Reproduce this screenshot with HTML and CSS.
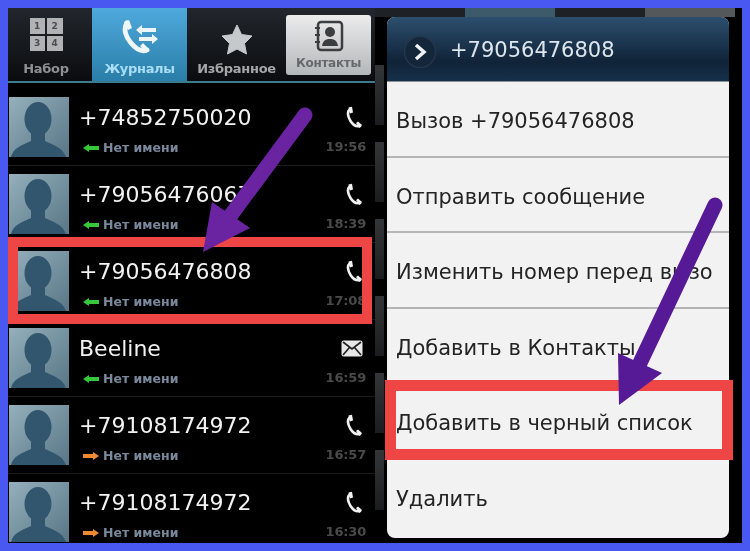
FILE: index.html
```
<!DOCTYPE html>
<html lang="ru">
<head>
<meta charset="utf-8">
<title>Журналы</title>
<link rel="stylesheet" href="styles.css">
</head>
<body>
<svg class="defs" width="0" height="0" aria-hidden="true">
  <defs>
    <symbol id="person" viewBox="0 0 60 60">
      <ellipse cx="29" cy="22" rx="13.500" ry="17"/>
      <path d="M2 60C4 51 13 48 22 44V32H36V44C45 48 54 51 57 60Z"/>
    </symbol>
    <symbol id="phone" viewBox="0 0 18 24">
      <path d="M5 3C2 6 3 11 5.500 15C8 19 11 21 15 20" fill="none" stroke="currentColor" stroke-width="2.600" stroke-linecap="round"/>
      <path d="M3.500 1.500L7 0.800L8 6.500L5 7.500ZM11 17L13 15.500L17 19L14.500 22Z" fill="currentColor"/>
    </symbol>
    <symbol id="mail" viewBox="0 0 22 17">
      <rect x="0.500" y="0.500" width="21" height="16" rx="2" fill="#e8e8e8"/>
      <path d="M2 2L11 9L20 2M2 15L8.500 7.500M20 15L13.500 7.500" fill="none" stroke="#222" stroke-width="1.700"/>
    </symbol>
    <symbol id="in" viewBox="0 0 16 8">
      <path d="M0 4L6 0V2H16V6H6V8Z" fill="#35c83a"/>
    </symbol>
    <symbol id="out" viewBox="0 0 16 8">
      <path d="M16 4L10 0V2H0V6H10V8Z" fill="#f08a30"/>
    </symbol>
  </defs>
</svg>

<main class="page">
  <section class="phone">
    <nav class="tabs">
      <div class="tab tab-first">
        <div class="keypad"><span>1</span><span>2</span><span>3</span><span>4</span></div>
        <span class="tab-label">Набор</span>
      </div>
      <div class="tab tab-active">
        <svg class="tab-icon" viewBox="0 0 38 36" width="38" height="36">
          <path d="M6 4C2 10 5 18 10 24C15 30 21 33 26 31" fill="none" stroke="#eef6fa" stroke-width="5" stroke-linecap="round"/>
          <path d="M3 3L8 1L11 9L7 11ZM19 27L22 24L28 30L25 34Z" fill="#eef6fa"/>
          <path d="M15 11L21 6V9H35V13H21V16ZM37 20L31 15V18H18V22H31V25Z" fill="#eef6fa"/>
        </svg>
        <span class="tab-label">Журналы</span>
      </div>
      <div class="tab tab-fav">
        <svg class="tab-icon" viewBox="0 0 32 31" width="32" height="31">
          <path d="M16 1L20.500 10.500L31 12L23.500 19.500L25.500 30L16 25L6.500 30L8.500 19.500L1 12L11.500 10.500Z" fill="#c6c9cc" stroke="#c6c9cc" stroke-linejoin="round"/>
        </svg>
        <span class="tab-label">Избранное</span>
      </div>
      <div class="tab tab-card">
        <svg class="tab-icon" viewBox="0 0 30 32" width="30" height="32">
          <rect x="4" y="2" width="24" height="28" rx="3" fill="none" stroke="#3c3f42" stroke-width="2.500"/>
          <path d="M1 8H6M1 15H6M1 22H6" stroke="#3c3f42" stroke-width="2"/>
          <circle cx="16" cy="12" r="5" fill="#3c3f42"/>
          <path d="M8 26C9 20 12 19 16 19C20 19 23 20 24 26Z" fill="#3c3f42"/>
        </svg>
        <span class="tab-label">Контакты</span>
      </div>
    </nav>

    <ul class="log">
      <li class="row">
        <div class="avatar"><svg width="60" height="60"><use href="#person"/></svg></div>
        <div class="info"><span class="number">+74852750020</span><span class="sub"><svg width="16" height="8"><use href="#in"/></svg>Нет имени</span></div>
        <div class="meta"><svg class="call" width="18" height="24"><use href="#phone"/></svg><span class="time">19:56</span></div>
      </li>
      <li class="row">
        <div class="avatar"><svg width="60" height="60"><use href="#person"/></svg></div>
        <div class="info"><span class="number">+79056476067</span><span class="sub"><svg width="16" height="8"><use href="#in"/></svg>Нет имени</span></div>
        <div class="meta"><svg class="call" width="18" height="24"><use href="#phone"/></svg><span class="time">18:39</span></div>
      </li>
      <li class="row">
        <div class="avatar"><svg width="60" height="60"><use href="#person"/></svg></div>
        <div class="info"><span class="number">+79056476808</span><span class="sub"><svg width="16" height="8"><use href="#in"/></svg>Нет имени</span></div>
        <div class="meta"><svg class="call" width="18" height="24"><use href="#phone"/></svg><span class="time">17:08</span></div>
      </li>
      <li class="row">
        <div class="avatar"><svg width="60" height="60"><use href="#person"/></svg></div>
        <div class="info"><span class="number">Beeline</span><span class="sub"><svg width="16" height="8"><use href="#in"/></svg>Нет имени</span></div>
        <div class="meta"><svg class="call" width="22" height="24" viewBox="0 0 22 24"><use href="#mail" y="3" width="22" height="17"/></svg><span class="time">16:59</span></div>
      </li>
      <li class="row">
        <div class="avatar"><svg width="60" height="60"><use href="#person"/></svg></div>
        <div class="info"><span class="number">+79108174972</span><span class="sub"><svg width="16" height="8"><use href="#out"/></svg>Нет имени</span></div>
        <div class="meta"><svg class="call" width="18" height="24"><use href="#phone"/></svg><span class="time">16:57</span></div>
      </li>
      <li class="row">
        <div class="avatar"><svg width="60" height="60"><use href="#person"/></svg></div>
        <div class="info"><span class="number">+79108174972</span><span class="sub"><svg width="16" height="8"><use href="#out"/></svg>Нет имени</span></div>
        <div class="meta"><svg class="call" width="18" height="24"><use href="#phone"/></svg><span class="time">16:30</span></div>
      </li>
    </ul>
  </section>

  <section class="phone phone-dim">
    <div class="dim-tabs"><i></i><i class="dim-blue"></i><i></i><i class="dim-light"></i></div>
    <div class="dim-list"><i></i><i></i><i></i><i></i><i></i><i></i></div>
    <div class="menu">
      <header class="menu-head">
        <svg width="34" height="34" viewBox="0 0 34 34">
          <circle cx="17" cy="17" r="15.500" fill="#13263a" stroke="#243648" stroke-width="1.500"/>
          <path d="M13 10L21 17L13 24" fill="none" stroke="#eef2f6" stroke-width="3.500"/>
        </svg>
        <span class="menu-title">+79056476808</span>
      </header>
      <ul class="menu-list">
        <li class="menu-item">Вызов +79056476808</li>
        <li class="menu-item">Отправить сообщение</li>
        <li class="menu-item">Изменить номер перед вызо</li>
        <li class="menu-item">Добавить в Контакты</li>
        <li class="menu-item">Добавить в черный список</li>
        <li class="menu-item">Удалить</li>
      </ul>
    </div>
  </section>

  <div class="mark mark-left"></div>
  <div class="mark mark-right"></div>
  <svg class="arrows" width="750" height="551" viewBox="0 0 750 551">
    <path class="shaft-a" d="M305 115L231 215"/>
    <path class="head-a" d="M203 252L212 202L250 228Z"/>
    <path class="shaft-b" d="M715 205L640 363"/>
    <path class="head-b" d="M619 405L618 353L662 373Z"/>
  </svg>
</main>
</body>
</html>
```

FILE: styles.css
```
* { box-sizing: border-box; }
html, body { margin: 0; padding: 0; }
body { background: #4a58f2; font-family: "DejaVu Sans", sans-serif; }
ul { list-style: none; margin: 0; padding: 0; }
.defs { position: absolute; }

.page {
  position: relative;
  width: 750px;
  height: 551px;
  padding: 8px;
  display: flex;
  overflow: hidden;
  filter: blur(0.5px);
}
.phone {
  width: 367px;
  height: 535px;
  background: #000;
  overflow: hidden;
  display: flex;
  flex-direction: column;
}

/* tabs */
.tabs {
  flex: none;
  height: 75px;
  display: flex;
  background: linear-gradient(#22272d, #0b0c0f);
  border-bottom: 2px solid #3b7d8e;
}
.tab {
  width: 84px;
  display: flex;
  flex-direction: column;
  align-items: center;
  justify-content: flex-end;
  padding-bottom: 3px;
}
.tab-first { padding-right: 8px; }
.tab-active {
  width: 95px;
  background: linear-gradient(#4fa9dc, #2a7ea8);
}
.tab-fav { width: 99px; }
.tab-card {
  width: 85px;
  margin: 7px 0 6px 0;
  border-radius: 3px;
  padding-bottom: 3px;
  background: linear-gradient(#ececec, #b4b7ba);
}
.tab-label { font-size: 13px; font-weight: 700; color: #8e9093; line-height: 18px; letter-spacing: -0.3px; white-space: nowrap; }
.tab-active .tab-label { color: #a9def7; }
.tab-fav .tab-label { color: #a4a6a8; }
.tab-card .tab-label { color: #66696c; font-size: 12px; }
.tab-icon { margin-bottom: 5px; }
.tab-card .tab-icon { margin-bottom: 2px; }
.keypad {
  width: 33px;
  height: 33px;
  display: grid;
  grid-template-columns: 1fr 1fr;
  gap: 2px;
  margin-bottom: 9px;
}
.keypad span {
  background: #b0b2b4;
  color: #4b4d50;
  font-size: 9px;
  font-weight: 700;
  display: flex;
  align-items: center;
  justify-content: center;
}

/* log */
.log { padding-top: 6px; }
.row {
  height: 77px;
  padding: 8px 9px 8px 1px;
  display: flex;
  border-bottom: 1px solid #1c1c1c;
}
.avatar {
  flex: none;
  width: 60px;
  height: 60px;
  background: linear-gradient(135deg, #95b0bc, #587686);
}
.avatar svg { display: block; fill: #33566f; }
.info { flex: 1; margin-left: 10px; display: flex; flex-direction: column; }
.number { font-size: 22px; line-height: 42px; color: #f2f2f2; white-space: nowrap; }
.sub {
  display: flex;
  align-items: center;
  gap: 4px;
  padding-left: 4px;
  line-height: 18px;
  font-size: 12.500px;
  font-weight: 700;
  color: #7a889c;
}
.meta { flex: none; width: 44px; display: flex; flex-direction: column; align-items: flex-end; }
.call { color: #f1f1f1; margin: 9px 3px 7px 0; }
.time { font-size: 13px; line-height: 20px; color: #4a4a4a; font-weight: 700; letter-spacing: -0.200px; }

/* dimmed right phone */
.phone-dim { position: relative; }
.dim-tabs { display: flex; height: 9px; flex: none; }
.dim-tabs i { width: 90px; background: #1e2226; }
.dim-tabs .dim-blue { background: #3d5a6a; }
.dim-tabs .dim-light { background: #55585a; }
.dim-list { padding-top: 48px; display: flex; flex-direction: column; gap: 17px; }
.dim-list i { width: 9px; height: 60px; background: linear-gradient(#333638, #1b1c1e); }

.menu {
  position: absolute;
  left: 12px;
  top: 9px;
  width: 342px;
  height: 521px;
  border-radius: 8px;
  overflow: hidden;
  background: #f2f2f2;
  display: flex;
  flex-direction: column;
}
.menu-head {
  flex: none;
  height: 65px;
  padding: 6px 0 0 16px;
  display: flex;
  align-items: center;
  gap: 13px;
  background: linear-gradient(#2c4f6e, #102338 70%, #16304a);
  border-bottom: 1px solid #8a9096;
}
.menu-title { font-size: 21px; color: #dde5ed; position: relative; top: -2px; }
.menu-list { flex: 1; display: flex; flex-direction: column; }
.menu-item {
  height: 75.500px;
  padding: 0 9px;
  display: block;
  white-space: nowrap;
  font-size: 21px;
  line-height: 78px;
  color: #242424;
  border-bottom: 2px solid #b4b4b4;
}
.menu-item:last-child { border-bottom: 0; }

/* annotations */
.mark { position: absolute; border: 10px solid #ee4545; }
.mark-left { left: 8px; top: 237px; width: 364px; height: 87px; }
.mark-right { left: 385px; top: 380px; width: 348px; height: 80px; border-width: 11px; }
.arrows { position: absolute; left: 0; top: 0; pointer-events: none; }
.shaft-a, .shaft-b { fill: none; stroke-width: 15; stroke-linecap: round; }
.shaft-a { stroke: #6a24a2; }
.shaft-b { stroke: #561a96; }
.head-a { fill: #6a24a2; }
.head-b { fill: #561a96; }
```
